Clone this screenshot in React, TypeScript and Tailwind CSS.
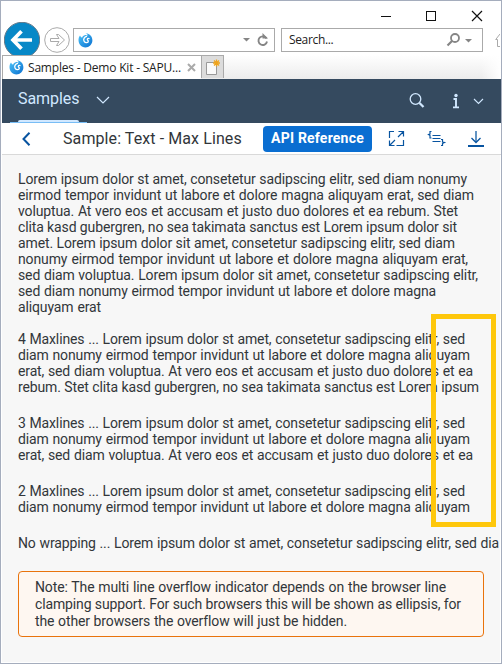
import React from "react";

type Line = [text: string, width: string];

const paragraphs: Line[][] = [
  [
    ["Lorem ipsum dolor st amet, consetetur sadipscing elitr, sed diam nonumy", "w-[449px]"],
    ["eirmod tempor invidunt ut labore et dolore magna aliquyam erat, sed diam", "w-[456px]"],
    ["voluptua. At vero eos et accusam et justo duo dolores et ea rebum. Stet", "w-[440px]"],
    ["clita kasd gubergren, no sea takimata sanctus est Lorem ipsum dolor sit", "w-[439px]"],
    ["amet. Lorem ipsum dolor sit amet, consetetur sadipscing elitr, sed diam", "w-[437px]"],
    ["nonumy eirmod tempor invidunt ut labore et dolore magna aliquyam erat,", "w-[450px]"],
    ["sed diam voluptua. Lorem ipsum dolor sit amet, consetetur sadipscing elitr,", "w-[460px]"],
    ["sed diam nonumy eirmod tempor invidunt ut labore et dolore magna", "w-[418px]"],
    ["aliquyam erat", "w-[83px]"],
  ],
  [
    ["4 Maxlines ... Lorem ipsum dolor st amet, consetetur sadipscing elitr, sed", "w-[447px]"],
    ["diam nonumy eirmod tempor invidunt ut labore et dolore magna aliquyam", "w-[452px]"],
    ["erat, sed diam voluptua. At vero eos et accusam et justo duo dolores et ea", "w-[455px]"],
    ["rebum. Stet clita kasd gubergren, no sea takimata sanctus est Lorem ipsum", "w-[461px]"],
  ],
  [
    ["3 Maxlines ... Lorem ipsum dolor st amet, consetetur sadipscing elitr, sed", "w-[447px]"],
    ["diam nonumy eirmod tempor invidunt ut labore et dolore magna aliquyam", "w-[452px]"],
    ["erat, sed diam voluptua. At vero eos et accusam et justo duo dolores et ea", "w-[455px]"],
  ],
  [
    ["2 Maxlines ... Lorem ipsum dolor st amet, consetetur sadipscing elitr, sed", "w-[447px]"],
    ["diam nonumy eirmod tempor invidunt ut labore et dolore magna aliquyam", "w-[452px]"],
  ],
];

const unwrapped: Line[] = [
  ["No wrapping ... Lorem ipsum dolor st amet, consetetur sadipscing elitr, sed dia", "w-[481px]"],
];

const note: Line[] = [
  ["Note: The multi line overflow indicator depends on the browser line", "w-[411px]"],
  ["clamping support. For such browsers this will be shown as ellipsis, for", "w-[426px]"],
  ["the other browsers the overflow will just be hidden.", "w-[312px]"],
];

function Lines({ lines }: { lines: Line[] }) {
  return lines.map(([text, width]) => (
    <span key={text} className={`block text-justify [text-align-last:justify] ${width}`}>{text}</span>
  ));
}

function Logo() {
  return (
    <svg width="15" height="15" viewBox="0 0 15 15" className="shrink-0">
      <defs>
        <linearGradient id="flame" x1="0" y1="0" x2="1" y2="1">
          <stop offset="0" stopColor="#4cc4f8" />
          <stop offset="1" stopColor="#0a6fd0" />
        </linearGradient>
      </defs>
      <path d="M2 2.500C0 5 0 9 2 11.800C4.500 15 9.500 15.200 12.200 12.500C15.200 9.700 15 4.700 12.300 2.200C11 1 9.500 .4 7.500 .6C8.800 1 9.600 1.600 9.900 2.500C7.500 1.300 5 2.200 4 4.800C3 4.200 2.300 3.500 2 2.500Z" fill="url(#flame)" />
      <path d="M9 3.200C6 4 5 6.400 6.200 8.300C7.400 10.200 10.300 9.900 10.300 8.200C10.300 7.200 9.200 7.200 9.300 6.200C9.400 5.300 10.500 5.200 11.500 5.800" fill="none" stroke="white" strokeWidth="1.300" />
    </svg>
  );
}

function Browser() {
  return (
    <div className="h-[78px] bg-white font-['Open_Sans','Noto_Sans',sans-serif] text-[#222]">
      <div className="flex h-[27px] items-center justify-end pr-[18px] pt-[3px]">
        <svg width="102" height="12" viewBox="0 0 102 12" fill="none" stroke="#111" shapeRendering="crispEdges">
          <path d="M0 6.500H10M45.500 1.500H54.500V10.500H45.500Z" />
          <path d="M91 1L101 11M101 1L91 11" shapeRendering="auto" strokeWidth="1.200" />
        </svg>
      </div>
      <div className="flex h-6 items-center">
        <svg width="36" height="36" viewBox="0 0 36 36" className="ml-[2px] shrink-0">
          <circle cx="18" cy="18" r="17.700" fill="#0788c7" stroke="#64798a" strokeWidth="1" />
          <path d="M28 18H10M17.500 9.200L9 18L17.500 26.800" fill="none" stroke="white" strokeWidth="3.700" />
        </svg>
        <svg width="26" height="26" viewBox="0 0 26 26" fill="none" stroke="#aaa" className="ml-1 shrink-0">
          <circle cx="13" cy="13" r="12.300" />
          <path d="M6.500 11.500H15L12.500 7.500H14.500L20.500 13L14.500 18.500H12.500L15 14.500H6.500Z" />
        </svg>
        <div className="ml-[3px] flex h-6 w-[202px] items-center border border-[#aaa] pl-1">
          <Logo />
          <svg width="28" height="16" viewBox="0 0 28 16" className="ml-auto mr-[3px]">
            <path d="M0 6H7L3.500 9.500Z" fill="#858585" />
            <path d="M24 6A4.300 4.300 0 1 0 24.500 9" transform="translate(-.5 .5)" fill="none" stroke="#858585" strokeWidth="1.900" />
            <path d="M20.500 1L20.500 6.500H26Z" fill="#858585" transform="translate(-1 0)" />
          </svg>
        </div>
        <div className="ml-[6px] flex h-6 w-[202px] items-center border border-[#aaa] pl-[7px] text-xs">
          <span className="tracking-[-0.35px]">Search...</span>
          <svg width="28" height="16" viewBox="0 0 28 16" className="ml-auto mr-[9px]">
            <circle cx="10" cy="6" r="4" fill="none" stroke="#858585" strokeWidth="1.800" />
            <path d="M7 9L2.500 13.500" stroke="#858585" strokeWidth="2.200" />
            <path d="M20 7H27L23.500 10.500Z" fill="#858585" />
          </svg>
        </div>
        <svg width="5" height="14" viewBox="0 0 5 14" className="ml-[12px]" fill="none" stroke="#aaa">
          <path d="M5 1L.7 6.500H2.500V13.500H5" />
        </svg>
      </div>
      <div className="relative mt-[3px] flex h-6 bg-gradient-to-b from-white to-[#ececec]">
        <div className="flex h-6 w-[199px] items-center border-l border-t border-[#aaa] bg-white pl-[6px] text-xs">
          <Logo />
          <span className="ml-1 whitespace-nowrap tracking-[-0.2px]">Samples - Demo Kit - SAPU...</span>
          <svg width="9" height="9" viewBox="0 0 9 9" className="ml-auto mr-[5px]">
            <path d="M1 1L8 8M8 1L1 8" stroke="#aaa" strokeWidth="2" />
          </svg>
        </div>
        <div className="flex h-[23px] w-[23px] items-center justify-center border border-b-0 border-[#aaa] bg-[#dcdcdc]">
          <svg width="17" height="17" viewBox="0 0 17 17">
            <path d="M2.500 3.500H12.500V15.500H2.500Z" fill="#fafafa" stroke="#999" />
            <path d="M12.500 .5V7.500M9 4H16M10 1.500L15 6.500M15 1.500L10 6.500" stroke="#efa41d" strokeWidth="1.300" />
          </svg>
        </div>
        <div className="ml-auto h-6 w-5 bg-gradient-to-r from-transparent to-white" />
      </div>
    </div>
  );
}

function Shell() {
  return (
    <header className="flex h-11 bg-[#354a5f] text-[#d1e8ff]">
      <div className="ml-2 flex h-11 w-[77px] flex-col items-center border-b border-[#78bdf5]">
        <span className="h-[41px] w-[61px] whitespace-nowrap pt-[9px] text-[16px] leading-[22px] tracking-[-0.05px]">Samples</span>
        <span className="h-[2px] w-[61px] rounded-t-sm bg-[#d1e8ff]" />
      </div>
      <svg width="14" height="8" viewBox="0 0 14 8" fill="none" stroke="currentColor" className="ml-[9px] mt-[17px]">
        <path d="M1 1L7 7L13 1" strokeWidth="1.200" />
      </svg>
      <svg width="76" height="18" viewBox="0 0 76 18" fill="none" stroke="currentColor" className="ml-auto mr-[17px] mt-[13px]">
        <circle cx="7.500" cy="7" r="5.300" strokeWidth="1.300" />
        <path d="M11.500 11L15.500 15" strokeWidth="2.300" />
        <path d="M45.500 7H48V15M45 15.400H51" strokeWidth="1.900" />
        <circle cx="48" cy="3.500" r="1.700" fill="currentColor" stroke="none" />
        <path d="M66 7L70.500 11.500L75 7" strokeWidth="1.100" />
      </svg>
    </header>
  );
}

function Toolbar() {
  return (
    <div className="flex h-8 items-center border-b border-[#d9d9d9] bg-white text-[#0854a0]">
      <svg width="10" height="14" viewBox="0 0 10 14" fill="none" stroke="currentColor" strokeWidth="2" className="ml-[19px]">
        <path d="M8.500 .8L2.500 7L8.500 13.200" />
      </svg>
      <h1 className="ml-[32px] w-[200px] whitespace-nowrap text-[16px] leading-5 tracking-[0.09px] text-[#32363a]">Sample: Text - Max Lines</h1>
      <button className="h-[26px] w-[109px] whitespace-nowrap rounded bg-[#0a6ed1] text-[14px] font-bold tracking-[0.2px] text-white">API Reference</button>
      <svg width="98" height="18" viewBox="0 0 98 18" fill="none" stroke="currentColor" className="ml-[15px]">
        <path d="M7 1.500H2.500V8M9.500 15.500H16.500V10M11.500 1.500H16.500V6.500M16 2L11 7M2.500 10.500V15.500H7.500M3 15L8 10" strokeWidth="1.200" />
        <path d="M45.500 5.500H53.500M45.500 8.500H53.500M45.500 11.500H53.500" strokeWidth="1.200" />
        <path d="M44.500 1.500H43V4L41.500 4.500L43 5.500V8H44.500M54 9.500H55.500V12L57.500 12.500L55.500 13.500V15.500H54" strokeWidth="1.200" />
        <path d="M89 1V12" stroke="#6394c3" strokeWidth="2" />
        <path d="M84.500 8L89 12.500L93.500 8" strokeWidth="1.300" />
        <path d="M81 16H97" strokeWidth="2" />
      </svg>
    </div>
  );
}

export default function App() {
  return (
    <main className="relative h-[664px] w-[502px] overflow-hidden border border-[#a5adbd] bg-white pl-px font-['Roboto','Noto_Sans',sans-serif]">
      <Browser />
      <Shell />
      <Toolbar />
      <section className="mr-px h-[507px] overflow-hidden bg-[#f7f7f7] pl-4 pt-4 text-[14px] leading-4 tracking-[-0.13px] text-[#32363a]">
        {paragraphs.map((lines, index) => (
          <p key={index} className={index === 0 ? "mb-4" : "mb-5"}>
            <Lines lines={lines} />
          </p>
        ))}
        <p><Lines lines={unwrapped} /></p>
        <div className="mt-[20px] h-[66px] w-[466px] rounded border border-[#e9730c] bg-[#fef7f1] pl-4 pt-[7px] leading-[17px]">
          <Lines lines={note} />
        </div>
      </section>
      <div className="pointer-events-none absolute left-[430px] top-[313px] h-[213px] w-[65px] border-[5px] border-[#fec70b]" />
    </main>
  );
}
